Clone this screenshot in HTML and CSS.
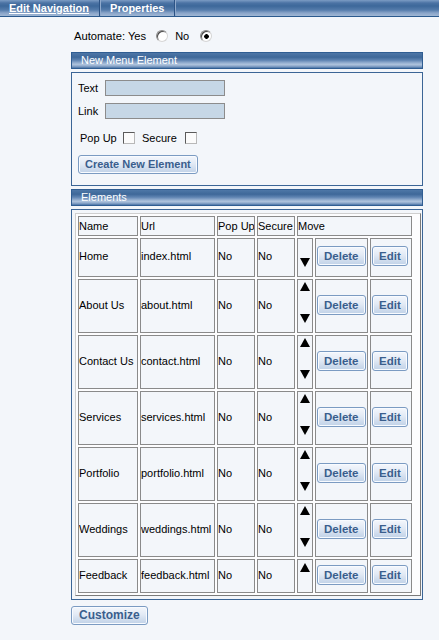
FILE: index.html
```html
<!DOCTYPE html>
<html>
<head>
<meta charset="utf-8">
<title>Edit Navigation</title>
<link rel="stylesheet" href="styles.css">
</head>
<body>
<div class="topbar">
  <a class="tab active">Edit Navigation</a><span class="sep"></span><a class="tab">Properties</a><span class="sep"></span>
</div>
<div class="content">
  <div class="automate">
    <span class="auto-label">Automate: Yes</span><span class="radio"></span><span class="no">No</span><span class="radio checked"></span>
  </div>

  <div class="panel-head">New Menu Element</div>
  <div class="panel-body form">
    <div class="field"><span class="flabel">Text</span><input class="textbox" type="text"></div>
    <div class="field link"><span class="flabel">Link</span><input class="textbox" type="text"></div>
    <div class="checks">
      <span class="clabel">Pop Up</span><span class="check"></span>
      <span class="clabel secure">Secure</span><span class="check"></span>
    </div>
    <button class="btn create">Create New Element</button>
  </div>

  <div class="panel-head second">Elements</div>
  <div class="panel-body list">
    <table class="grid">
      <colgroup>
        <col class="c-name"><col class="c-url"><col class="c-pop"><col class="c-sec"><col class="c-arrow"><col class="c-del"><col class="c-edit"><col class="c-blank">
      </colgroup>
      <tr class="head"><td>Name</td><td>Url</td><td>Pop Up</td><td>Secure</td><td colspan="3">Move</td></tr>
      <tr>
        <td>Home</td><td>index.html</td><td>No</td><td>No</td>
        <td class="arrows"><div class="stack first"><span class="down"></span></div></td>
        <td class="bcell"><button class="btn">Delete</button></td><td class="bcell"><button class="btn">Edit</button></td>
      </tr>
      <tr>
        <td>About Us</td><td>about.html</td><td>No</td><td>No</td>
        <td class="arrows"><div class="stack"><span class="up"></span><span class="down"></span></div></td>
        <td class="bcell"><button class="btn">Delete</button></td><td class="bcell"><button class="btn">Edit</button></td>
      </tr>
      <tr>
        <td>Contact Us</td><td>contact.html</td><td>No</td><td>No</td>
        <td class="arrows"><div class="stack"><span class="up"></span><span class="down"></span></div></td>
        <td class="bcell"><button class="btn">Delete</button></td><td class="bcell"><button class="btn">Edit</button></td>
      </tr>
      <tr>
        <td>Services</td><td>services.html</td><td>No</td><td>No</td>
        <td class="arrows"><div class="stack"><span class="up"></span><span class="down"></span></div></td>
        <td class="bcell"><button class="btn">Delete</button></td><td class="bcell"><button class="btn">Edit</button></td>
      </tr>
      <tr>
        <td>Portfolio</td><td>portfolio.html</td><td>No</td><td>No</td>
        <td class="arrows"><div class="stack"><span class="up"></span><span class="down"></span></div></td>
        <td class="bcell"><button class="btn">Delete</button></td><td class="bcell"><button class="btn">Edit</button></td>
      </tr>
      <tr>
        <td>Weddings</td><td>weddings.html</td><td>No</td><td>No</td>
        <td class="arrows"><div class="stack"><span class="up"></span><span class="down"></span></div></td>
        <td class="bcell"><button class="btn">Delete</button></td><td class="bcell"><button class="btn">Edit</button></td>
      </tr>
      <tr>
        <td>Feedback</td><td>feedback.html</td><td>No</td><td>No</td>
        <td class="arrows"><div class="stack last"><span class="up"></span></div></td>
        <td class="bcell"><button class="btn">Delete</button></td><td class="bcell"><button class="btn">Edit</button></td>
      </tr>
    </table>
  </div>
  <button class="btn customize">Customize</button>
</div>
</body>
</html>
```
FILE: styles.css
```css
html, body {
  margin: 0;
  padding: 0;
  background: #f3f6fa;
}
body {
  font-family: "Liberation Sans", Arial, sans-serif;
  font-size: 11px;
  color: #000;
}

/* top tab bar */
.topbar {
  height: 16px;
  border-bottom: 1px solid #2b5a8e;
  background: linear-gradient(to bottom, #7c9cc4 0px, #4b73a4 3px, #3d689a 6px, #557cab 10px, #8aa5c9 13px, #a0b7d4 16px);
  display: flex;
  align-items: stretch;
}
.tab {
  color: #fff;
  font-weight: bold;
  font-size: 11px;
  line-height: 16px;
  padding: 0 10px 0 9px;
  cursor: pointer;
}
.tab.active {
  text-decoration: underline;
}
.sep {
  width: 1px;
  background: #2c5385;
  border-right: 1px solid #90aacc;
}

.content {
  margin-left: 71px;
  width: 352px;
}

/* automate row */
.automate {
  display: flex;
  align-items: center;
  height: 14px;
  margin: 12px 0 9px 0;
  padding-left: 3px;
}
.auto-label {
  font-size: 11.2px;
}
.radio {
  display: inline-block;
  box-sizing: border-box;
  width: 12px;
  height: 12px;
  border-radius: 50%;
  border: 1px solid #8a8a8a;
  border-right-color: #d6d6d6;
  border-bottom-color: #d6d6d6;
  box-shadow: inset 1px 1px 0 #4a4a4a;
  background: #fff;
  margin-left: 10px;
}
.radio.checked {
  margin-left: 11px;
  background: radial-gradient(circle at 55% 55%, #000 0, #000 2px, #fff 2.6px);
}
.no {
  margin-left: 7px;
}

/* panels */
.panel-head {
  height: 15px;
  line-height: 15px;
  border: 1px solid #2f5d92;
  color: #fff;
  padding-left: 9px;
  background: linear-gradient(to bottom, #4e77a7 0%, #3e6899 28%, #5f84b2 48%, #9bb4d3 68%, #adc2dc 78%, #7f9dc3 90%, #4b74a5 100%);
}
.panel-head.second {
  margin-top: 3px;
}
.panel-body {
  border: 1px solid #3b6596;
  margin-top: 3px;
}

/* form */
.form {
  padding: 7px 0 11px 6px;
}
.field {
  display: flex;
  align-items: center;
  height: 16px;
}
.field.link {
  margin-top: 7px;
}
.flabel {
  width: 27px;
}
.textbox {
  box-sizing: border-box;
  width: 120px;
  height: 16px;
  margin: 0;
  padding: 0;
  border: 1px solid #8c8c8c;
  background: #c6d7e6;
  font: inherit;
}
.checks {
  display: flex;
  align-items: center;
  height: 12px;
  margin-top: 13px;
  padding-left: 2px;
}
.clabel {
  width: 43px;
}
.clabel.secure {
  margin-left: 7px;
}
.check {
  box-sizing: border-box;
  width: 12px;
  height: 12px;
  border: 1px solid #5a5a5a;
  border-right-color: #b8b8b8;
  border-bottom-color: #b8b8b8;
  background: #fbfbfb;
}

/* buttons */
.btn {
  appearance: none;
  box-sizing: border-box;
  height: 20px;
  margin: 0;
  padding: 0 6px;
  border: 1px solid #7b9bc2;
  border-radius: 3px;
  background: linear-gradient(to bottom, #f4f7fc 0%, #e2eaf5 45%, #cfdced 75%, #c0d2e8 100%);
  box-shadow: inset 0 0 0 1px #f8fbff;
  color: #3a5e8d;
  font-family: "Liberation Sans", Arial, sans-serif;
  font-weight: bold;
  font-size: 11.5px;
  line-height: 18px;
  cursor: pointer;
}
.btn.create {
  display: block;
  height: 19px;
  line-height: 17px;
  margin-top: 11px;
  font-size: 11px;
}
.btn.customize {
  display: block;
  height: 19px;
  line-height: 17px;
  margin-top: 6px;
  font-size: 12px;
  padding: 0 7px;
}

/* elements table */
.list {
  padding: 3px 2px 3px 3px;
}
.grid {
  table-layout: fixed;
  width: 346px;
  border-collapse: separate;
  border-spacing: 2px;
  border: 1px solid #7a7a7a;
  border-top-color: #cfcfcf;
  border-left-color: #cfcfcf;
  background: #fdfdfe;
  font-size: 11px;
}
.c-name { width: 60px; }
.c-url { width: 75px; }
.c-pop { width: 38px; }
.c-sec { width: 38px; }
.c-arrow { width: 16px; }
.c-del { width: 53px; }
.c-edit { width: 42px; }
.c-blank { width: 4px; }

.grid td {
  box-sizing: border-box;
  border: 1px solid #8a8a8a;
  background: #f3f6fa;
  padding: 0 0 3px 0;
  vertical-align: middle;
  white-space: nowrap;
  overflow: hidden;
}
.grid tr.head td {
  height: 20px;
  padding: 0;
  line-height: 18px;
}
.grid td.arrows {
  padding: 0;
  vertical-align: top;
}
.stack {
  box-sizing: border-box;
  height: 52px;
  display: flex;
  flex-direction: column;
  justify-content: space-between;
  padding: 2px 0 9px 2px;
}
.stack.first {
  height: 37px;
  justify-content: flex-end;
  padding-bottom: 9px;
}
.stack.last {
  height: 32px;
  justify-content: flex-start;
  padding-top: 3px;
}
.up, .down {
  display: block;
  width: 0;
  height: 0;
  border-left: 5px solid transparent;
  border-right: 5px solid transparent;
}
.up {
  border-bottom: 9px solid #000;
}
.down {
  border-top: 9px solid #000;
}
.grid td.bcell {
  padding: 0 0 3px 1px;
}
```
